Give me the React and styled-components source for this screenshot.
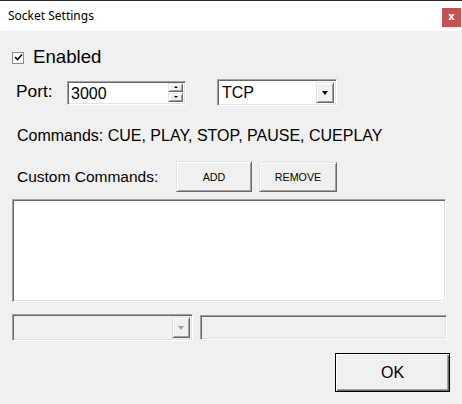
import React from "react";
import styled, { createGlobalStyle, css } from "styled-components";

const Global = createGlobalStyle`
  html, body { margin: 0; padding: 0; background: #f0f0f0; }
  body { width: 462px; height: 404px; overflow: hidden; }
  * { box-sizing: border-box; }
`;

const sunken = css`
  border: 1px solid;
  border-color: #a0a0a0 #ffffff #ffffff #a0a0a0;
  box-shadow: inset 1px 1px 0 #696969, inset -1px -1px 0 #e3e3e3;
`;

const raised = css`
  border: 1px solid;
  border-color: #e3e3e3 #696969 #696969 #e3e3e3;
  box-shadow: inset 1px 1px 0 #ffffff, inset -1px -1px 0 #a0a0a0;
`;

const Window = styled.div`
  width: 462px;
  height: 404px;
  display: flex;
  flex-direction: column;
  background: #f0f0f0;
  font-family: "Liberation Sans", Arial, sans-serif;
  color: #000;
`;

const TitleBar = styled.div`
  height: 31px;
  flex: none;
  background: #fff;
  border-top: 1px solid #262626;
  display: flex;
  align-items: flex-start;
  justify-content: space-between;
  padding-left: 8px;
  padding-right: 1px;
`;

const Title = styled.div`
  font-family: "Noto Sans", "Segoe UI", sans-serif;
  font-size: 12px;
  line-height: 16px;
  margin-top: 7px;
  color: #000;
`;

const CloseBtn = styled.div`
  width: 19px;
  height: 19px;
  margin-top: 7px;
  background: #c75050;
  color: #fff;
  font-family: "DejaVu Sans", sans-serif;
  font-weight: bold;
  font-size: 10px;
  line-height: 18px;
  text-align: center;
`;

const Content = styled.div`
  flex: 1;
  display: flex;
  flex-direction: column;
  padding: 15px 12px 0 12px;
`;

const EnabledRow = styled.div`
  height: 22px;
  display: flex;
  align-items: center;
`;

const CheckBox = styled.div`
  width: 12px;
  height: 12px;
  border: 1px solid #8a8a8a;
  background: #fff;
  display: flex;
  align-items: center;
  justify-content: center;
  margin-right: 9px;
  margin-top: 1px;
`;

const BigLabel = styled.span`
  font-size: ${(p) => p.size || 16}px;
  line-height: 22px;
  white-space: nowrap;
`;

const PortRow = styled.div`
  margin-top: 11px;
  height: 27px;
  display: flex;
  align-items: center;
  padding-left: 4px;
`;

const PortLabel = styled.span`
  width: 51px;
  font-size: 17.33px;
  line-height: 20px;
  margin-top: -3px;
`;

const SpinBox = styled.div`
  ${sunken};
  width: 119px;
  height: 24px;
  background: #fff;
  display: flex;
  align-items: stretch;
  padding: 2px 2px 2px 3px;
`;

const FieldText = styled.div`
  flex: 1;
  font-size: 16px;
  line-height: 20px;
  color: ${(p) => (p.disabled ? "#888" : "#000")};
`;

const SpinButtons = styled.div`
  width: 15px;
  display: flex;
  flex-direction: column;
  gap: 1px;
  margin: -1px 0 0 0;
`;

const SpinBtn = styled.div`
  ${raised};
  flex: 1;
  background: #f0f0f0;
  display: flex;
  align-items: center;
  justify-content: center;
`;

const Arrow = styled.div`
  width: 0;
  height: 0;
  border-left: ${(p) => p.w}px solid transparent;
  border-right: ${(p) => p.w}px solid transparent;
  ${(p) =>
    p.up
      ? `border-bottom: ${p.h}px solid ${p.color || "#000"};`
      : `border-top: ${p.h}px solid ${p.color || "#000"};`}
`;

const Combo = styled.div`
  ${sunken};
  width: ${(p) => p.w}px;
  height: 27px;
  margin-left: ${(p) => p.ml || 0}px;
  background: ${(p) => (p.disabled ? "#f0f0f0" : "#fff")};
  display: flex;
  align-items: stretch;
  padding: 2px;
`;

const ComboText = styled.div`
  flex: 1;
  font-size: 16px;
  line-height: 22px;
  padding-left: 2px;
`;

const DropBtn = styled.div`
  ${raised};
  width: 18px;
  background: #f0f0f0;
  display: flex;
  align-items: center;
  justify-content: center;
`;

const InfoText = styled.div`
  margin-top: 21px;
  padding-left: 5px;
  font-size: 16px;
  line-height: 18px;
  white-space: nowrap;
`;

const CustomRow = styled.div`
  margin-top: 16px;
  height: 31px;
  display: flex;
  align-items: center;
  padding-left: 5px;
`;

const CustomLabel = styled.span`
  width: 159px;
  font-size: 15.5px;
  line-height: 18px;
  white-space: nowrap;
`;

const Button = styled.div`
  ${raised};
  width: ${(p) => p.w}px;
  height: ${(p) => p.h}px;
  margin-left: ${(p) => p.ml || 0}px;
  background: #f0f0f0;
  display: flex;
  align-items: center;
  justify-content: center;
  font-size: ${(p) => p.fs}px;
  ${(p) =>
    p.isDefault &&
    css`
      border: 1px solid #000;
      box-shadow: inset 1px 1px 0 #ffffff, inset -1px -1px 0 #696969,
        inset -2px -2px 0 #a0a0a0;
    `}
`;

const ListBox = styled.div`
  ${sunken};
  margin-top: 7px;
  margin-right: 4px;
  height: 103px;
  background: #fff;
`;

const BottomRow = styled.div`
  margin-top: 12px;
  height: 27px;
  display: flex;
  align-items: center;
`;

const TextField = styled.div`
  ${sunken};
  width: ${(p) => p.w}px;
  height: 25px;
  margin-left: ${(p) => p.ml || 0}px;
  background: #f0f0f0;
`;

const OkRow = styled.div`
  margin-top: 12px;
  display: flex;
  justify-content: flex-end;
`;

export default function App() {
  return (
    <>
      <Global />
      <Window>
        <TitleBar>
          <Title>Socket Settings</Title>
          <CloseBtn>x</CloseBtn>
        </TitleBar>
        <Content>
          <EnabledRow>
            <CheckBox>
              <svg width="9" height="9" viewBox="0 0 9 9">
                <path d="M1 4 L3.5 6.5 L8 1.5" fill="none" stroke="#000" strokeWidth="1.6" />
              </svg>
            </CheckBox>
            <BigLabel size={18.67}>Enabled</BigLabel>
          </EnabledRow>
          <PortRow>
            <PortLabel>Port:</PortLabel>
            <SpinBox>
              <FieldText>3000</FieldText>
              <SpinButtons>
                <SpinBtn>
                  <Arrow up w={2} h={2} />
                </SpinBtn>
                <SpinBtn>
                  <Arrow w={2} h={2} />
                </SpinBtn>
              </SpinButtons>
            </SpinBox>
            <Combo w={120} ml={31}>
              <ComboText>TCP</ComboText>
              <DropBtn>
                <Arrow w={3.5} h={4} />
              </DropBtn>
            </Combo>
          </PortRow>
          <InfoText>Commands: CUE, PLAY, STOP, PAUSE, CUEPLAY</InfoText>
          <CustomRow>
            <CustomLabel>Custom Commands:</CustomLabel>
            <Button w={76} h={31} fs={10.7}>ADD</Button>
            <Button w={78} h={30} ml={7} fs={10.7}>REMOVE</Button>
          </CustomRow>
          <ListBox />
          <BottomRow>
            <Combo w={181} disabled>
              <ComboText />
              <DropBtn>
                <Arrow w={3.5} h={4} color="#a0a0a0" />
              </DropBtn>
            </Combo>
            <TextField w={247} ml={7} />
          </BottomRow>
          <OkRow>
            <Button w={115} h={39} fs={16} isDefault>OK</Button>
          </OkRow>
        </Content>
      </Window>
    </>
  );
}
